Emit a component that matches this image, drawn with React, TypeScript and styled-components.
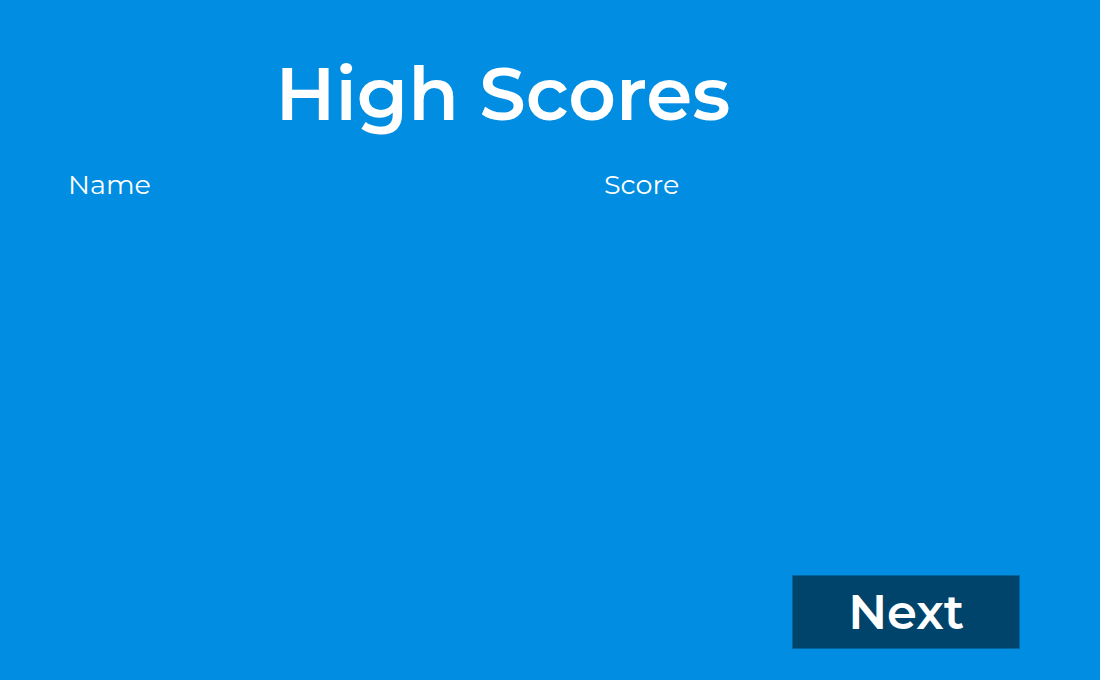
import React from "react";
import styled, { createGlobalStyle } from "styled-components";

const GlobalStyle = createGlobalStyle`
  body {
    margin: 0;
    background: #008de2;
    color: #ffffff;
    font-family: Montserrat, Inter, "Open Sans", sans-serif;
  }
`;

const Page = styled.main`
  box-sizing: border-box;
  min-height: 100vh;
  display: flex;
  flex-direction: column;
  padding: 48px 80px 31px 68px;
`;

const Title = styled.h1`
  margin: 0;
  padding-right: 82px;
  text-align: center;
  font-size: 74px;
  line-height: 92px;
  font-weight: 600;
`;

const ScoreTable = styled.table`
  width: 100%;
  margin-top: 28px;
  border-collapse: collapse;
  table-layout: fixed;
`;

const HeaderCell = styled.th<{ $width?: string }>`
  width: ${({ $width }) => $width ?? "auto"};
  padding: 0;
  text-align: left;
  font-size: 27px;
  line-height: 34px;
  font-weight: 400;
`;

const Actions = styled.footer`
  margin-top: auto;
  display: flex;
  justify-content: flex-end;
`;

const NextButton = styled.button`
  padding: 8px 55px;
  border: 1px solid #00659f;
  background: #00446c;
  color: inherit;
  font-family: inherit;
  font-size: 48px;
  line-height: 56px;
  font-weight: 600;
  cursor: pointer;
`;

export default function App() {
  return (
    <>
      <GlobalStyle />
      <Page>
        <Title>High Scores</Title>
        <ScoreTable>
          <thead>
            <tr>
              <HeaderCell scope="col" $width="56.3%">Name</HeaderCell>
              <HeaderCell scope="col">Score</HeaderCell>
            </tr>
          </thead>
          <tbody />
        </ScoreTable>
        <Actions>
          <NextButton type="button">Next</NextButton>
        </Actions>
      </Page>
    </>
  );
}
